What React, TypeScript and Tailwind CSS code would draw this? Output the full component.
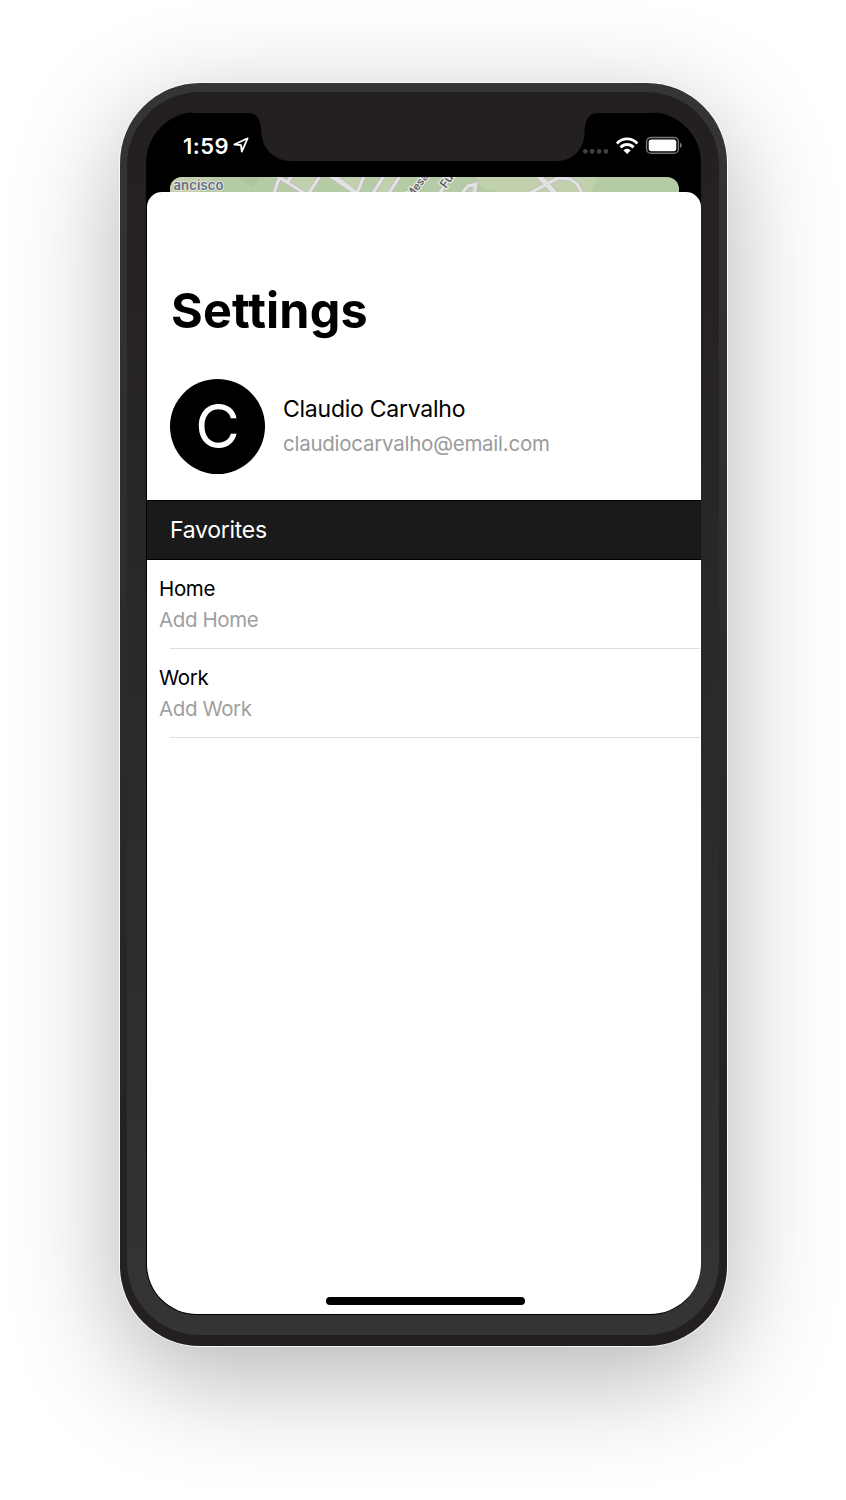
import React from "react";

const favorites = [
  { title: "Home", hint: "Add Home" },
  { title: "Work", hint: "Add Work" },
];

const roads =
  "M280 176L274 193M277 176L304 193M292 176L288 181M320 176L309 193M364 176L357 193M384 176L373 193M400 176L389 193M440 193L450 177M462 193L468 186L476 184L474.5 193M530 193L558 178L570 179L577 184L582 193";

function LocationArrow() {
  return (
    <svg className="h-[18px] w-[18px]" viewBox="0 0 18 18" fill="none">
      <path d="M15.6 2.3 L2.4 8.5 L9 9.1 L9.8 15.6 Z" stroke="#fff" strokeWidth="1.8" strokeLinejoin="round" />
    </svg>
  );
}

function StatusIcons() {
  return (
    <svg className="mt-[2px] h-[24px] w-[102px] shrink-0" viewBox="581 134 102 24">
      <g fill="#3f3f40">
        <circle cx="585.3" cy="151.4" r="2.4" />
        <circle cx="592.1" cy="151.4" r="2.4" />
        <circle cx="599.1" cy="151.4" r="2.4" />
        <circle cx="605.9" cy="151.4" r="2.4" />
      </g>
      <g fill="none" stroke="#fff" strokeWidth="2.9">
        <path d="M616.9 143.4 C622.7 137.4 631.5 137.4 637.3 143.4" />
        <path d="M620.6 147.4 C624.4 143.6 629.8 143.6 633.6 147.4" />
      </g>
      <path d="M623.4 150.3 C625.6 148.2 628.6 148.2 630.8 150.3 L627.1 153.9 Z" fill="#fff" />
      <rect x="646.6" y="137.5" width="31.8" height="15.8" rx="4.4" fill="none" stroke="#77777a" strokeWidth="1.4" />
      <rect x="648.7" y="139.6" width="27.6" height="11.6" rx="2.6" fill="#fff" />
      <path d="M680 142.8 C682.4 143.7 682.4 147.2 680 148.1 Z" fill="#77777a" />
    </svg>
  );
}

function MapStrip() {
  return (
    <svg className="mx-auto block h-[30px] w-[509px] rounded-t-[12px]" viewBox="170 177 509 30">
      <rect x="170" y="177" width="509" height="30" fill="#b5cba6" />
      <g fill="#c1d0ad">
        <path d="M170 177H213L198 192H170Z" />
        <path d="M292 177H320L311 192H303L286 182Z" />
        <path d="M336 177H362L357 192Z" />
        <path d="M384 177H400L389 192H373Z" />
        <path d="M476 177H598L590 192H500L482 188Z" />
      </g>
      <path d="M237 177H260L252 187Z" fill="#adc59d" />
      <path d={roads} fill="none" stroke="#bcb8b3" strokeWidth="4.6" />
      <path d="M539 176L555 193" stroke="#bcb8b3" strokeWidth="6.6" />
      <path d="M327 176H338L360 193H352Z" fill="#e2e1e3" stroke="#bcb8b3" strokeWidth="0.8" />
      <path d={roads} fill="none" stroke="#e2e1e3" strokeWidth="3.2" />
      <path d="M539 176L555 193" stroke="#e2e1e3" strokeWidth="5" />
      <path d="M470 192V188M472.5 192V187" stroke="#d2d0cf" strokeWidth="1.2" />
      <g
        fontFamily="Inter, sans-serif"
        fontSize="13"
        fontWeight="600"
        stroke="#ebebe8"
        strokeWidth="2.4"
        style={{ paintOrder: "stroke" }}
      >
        <text x="173.5" y="190" fill="#646f85" strokeWidth="1.4" textLength="50">ancisco</text>
        <text transform="translate(411.3 199.5) rotate(-53)" fontSize="11" fill="#666">Mesa</text>
        <text transform="translate(446 189) rotate(-55)" fontSize="12" fill="#666">Fu</text>
      </g>
    </svg>
  );
}

function Notch() {
  return (
    <svg className="absolute left-[99px] top-0 h-[49px] w-[354px]" viewBox="246 112 354 49">
      <path
        d="M246 112H600V113H598C587 113.2 585 122 584.5 133C584 149 573 161 557 161H291C275 161 262 149 261.5 133C261 122 259 113.2 248 113H246Z"
        fill="#242021"
      />
    </svg>
  );
}

export default function App() {
  return (
    <div className="h-[1500px] w-[846px] overflow-hidden bg-white pl-[120px] pt-[83px] font-['Inter',sans-serif]">
      <div className="h-[1263px] w-[607px] rounded-[80px] bg-linear-to-b from-[#353535] to-[#231f20] pl-[7px] pt-[9px] shadow-[0_0_0_1px_rgba(255,255,255,0.8),0_30px_110px_rgba(0,0,0,0.3)]">
        <div className="h-[1243px] w-[592px] rounded-[73px] bg-linear-to-b from-[#231f20] to-[#343434] pl-[19px] pt-[20px]">
          <div className="relative flex h-[1203px] w-[555px] flex-col overflow-hidden rounded-[51px] border-b border-l border-black bg-black">
            <div className="h-px w-full shrink-0 bg-[#242021]" />
            <div className="flex h-[64px] shrink-0 items-center justify-between pl-[36px] pr-[18px]">
              <div className="flex items-center gap-[3px] text-[22px] font-semibold leading-none text-white">
                <span className="mt-[1px] tracking-[0.45px]">1:59</span>
                <LocationArrow />
              </div>
              <StatusIcons />
            </div>
            <Notch />
            <div className="h-[15px] shrink-0">
              <MapStrip />
            </div>
            <main className="relative flex min-h-0 flex-1 flex-col rounded-t-[15px] bg-white text-black">
              <h1 className="ml-[24px] mt-[89px] text-[48.5px] font-bold leading-[60px] tracking-[0.15px]">Settings</h1>
              <section className="ml-[23px] mt-[37.5px] flex items-center gap-[18px]">
                <div className="flex size-[95px] items-center justify-center rounded-full bg-black text-[61px] font-normal leading-none text-white">C</div>
                <div className="flex flex-col">
                  <span className="text-[23px] leading-[34px] tracking-[-0.25px]">Claudio Carvalho</span>
                  <span className="text-[20.5px] leading-[35px] tracking-[-0.25px] text-[#9b9b9b]">claudiocarvalho@email.com</span>
                </div>
              </section>
              <h2 className="mt-[26.5px] flex h-[60px] items-center border-y border-black bg-[#1a1a1a] pl-[23px] text-[23px] font-normal tracking-[-0.27px] text-white">Favorites</h2>
              <ul>
                {favorites.map((item) => (
                  <li key={item.title} className="flex h-[89px] flex-col pt-[13px]">
                    <span className="pl-[12px] text-[20.5px] leading-[31px] tracking-[-0.35px]">{item.title}</span>
                    <span className="pl-[12px] text-[20.5px] leading-[31px] tracking-[-0.4px] text-[#a0a0a0]">{item.hint}</span>
                    <div className="ml-[23px] mr-[1px] mt-auto h-px bg-[#dedede]" />
                  </li>
                ))}
              </ul>
              <div className="mb-[9px] ml-[179px] mt-auto h-[8px] w-[199px] rounded-full bg-black" />
            </main>
          </div>
        </div>
      </div>
    </div>
  );
}
